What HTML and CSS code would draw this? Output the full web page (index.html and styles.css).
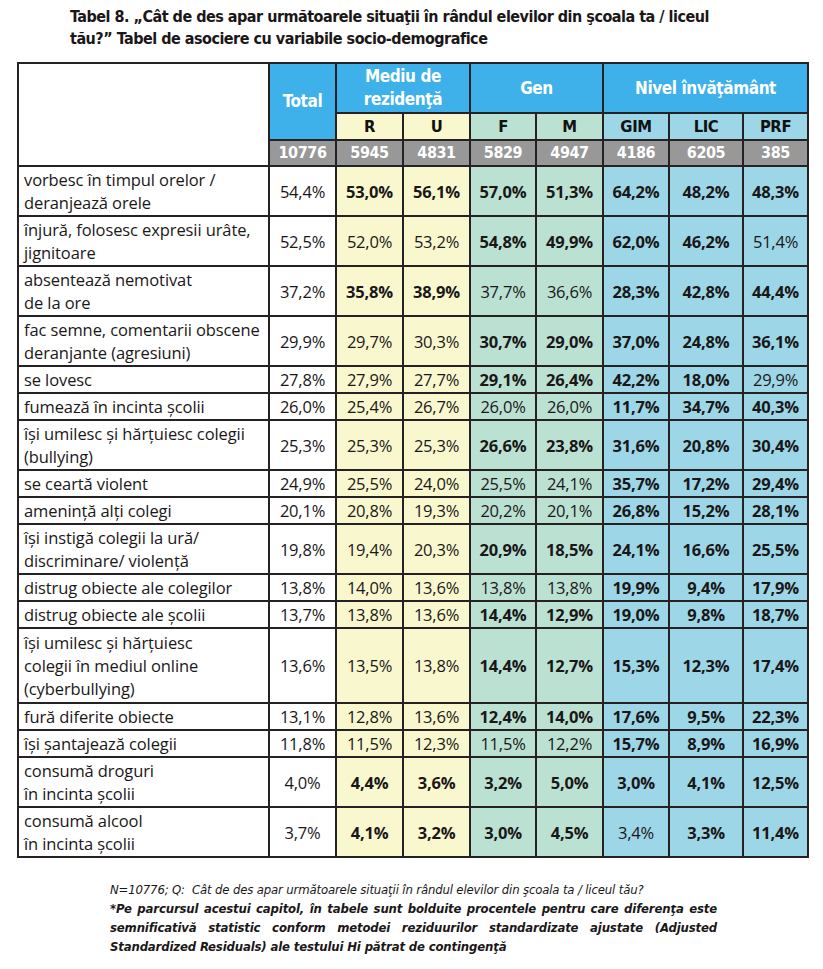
FILE: index.html
```html
<!DOCTYPE html>
<html lang="ro">
<head>
<meta charset="utf-8">
<link rel="stylesheet" href="styles.css">
</head>
<body>
<div class="page">
  <h1 class="title">Tabel 8. „Cât de des apar următoarele situaţii în rândul elevilor din şcoala ta / liceul<br>tău?” Tabel de asociere cu variabile socio-demografice</h1>
  <table class="data">
    <colgroup>
      <col class="c-label"><col class="c-total"><col class="c-r"><col class="c-u"><col class="c-f"><col class="c-m"><col class="c-gim"><col class="c-lic"><col class="c-prf">
    </colgroup>
    <thead>
      <tr class="h1">
        <th class="blank" rowspan="3"></th>
        <th class="hb" rowspan="2">Total</th>
        <th class="hb" colspan="2">Mediu de<br>rezidenţă</th>
        <th class="hb" colspan="2">Gen</th>
        <th class="hb" colspan="3">Nivel învăţământ</th>
      </tr>
      <tr class="h2">
        <th class="y">R</th><th class="y">U</th>
        <th class="g">F</th><th class="g">M</th>
        <th class="b">GIM</th><th class="b">LIC</th><th class="b">PRF</th>
      </tr>
      <tr class="h3">
        <th>10776</th><th>5945</th><th>4831</th><th>5829</th><th>4947</th><th>4186</th><th>6205</th><th>385</th>
      </tr>
    </thead>
    <tbody>
      <tr><td class="lbl">vorbesc în timpul orelor /<br>deranjează orele</td><td>54,4%</td><td class="y s">53,0%</td><td class="y s">56,1%</td><td class="g s">57,0%</td><td class="g s">51,3%</td><td class="b s">64,2%</td><td class="b s">48,2%</td><td class="b s">48,3%</td></tr>
      <tr><td class="lbl">înjură, folosesc expresii urâte,<br>jignitoare</td><td>52,5%</td><td class="y">52,0%</td><td class="y">53,2%</td><td class="g s">54,8%</td><td class="g s">49,9%</td><td class="b s">62,0%</td><td class="b s">46,2%</td><td class="b">51,4%</td></tr>
      <tr><td class="lbl">absentează nemotivat<br>de la ore</td><td>37,2%</td><td class="y s">35,8%</td><td class="y s">38,9%</td><td class="g">37,7%</td><td class="g">36,6%</td><td class="b s">28,3%</td><td class="b s">42,8%</td><td class="b s">44,4%</td></tr>
      <tr><td class="lbl">fac semne, comentarii obscene<br>deranjante (agresiuni)</td><td>29,9%</td><td class="y">29,7%</td><td class="y">30,3%</td><td class="g s">30,7%</td><td class="g s">29,0%</td><td class="b s">37,0%</td><td class="b s">24,8%</td><td class="b s">36,1%</td></tr>
      <tr><td class="lbl">se lovesc</td><td>27,8%</td><td class="y">27,9%</td><td class="y">27,7%</td><td class="g s">29,1%</td><td class="g s">26,4%</td><td class="b s">42,2%</td><td class="b s">18,0%</td><td class="b">29,9%</td></tr>
      <tr><td class="lbl">fumează în incinta şcolii</td><td>26,0%</td><td class="y">25,4%</td><td class="y">26,7%</td><td class="g">26,0%</td><td class="g">26,0%</td><td class="b s">11,7%</td><td class="b s">34,7%</td><td class="b s">40,3%</td></tr>
      <tr><td class="lbl">îşi umilesc şi hărţuiesc colegii<br>(bullying)</td><td>25,3%</td><td class="y">25,3%</td><td class="y">25,3%</td><td class="g s">26,6%</td><td class="g s">23,8%</td><td class="b s">31,6%</td><td class="b s">20,8%</td><td class="b s">30,4%</td></tr>
      <tr><td class="lbl">se ceartă violent</td><td>24,9%</td><td class="y">25,5%</td><td class="y">24,0%</td><td class="g">25,5%</td><td class="g">24,1%</td><td class="b s">35,7%</td><td class="b s">17,2%</td><td class="b s">29,4%</td></tr>
      <tr><td class="lbl">ameninţă alţi colegi</td><td>20,1%</td><td class="y">20,8%</td><td class="y">19,3%</td><td class="g">20,2%</td><td class="g">20,1%</td><td class="b s">26,8%</td><td class="b s">15,2%</td><td class="b s">28,1%</td></tr>
      <tr><td class="lbl">îşi instigă colegii la ură/<br>discriminare/ violenţă</td><td>19,8%</td><td class="y">19,4%</td><td class="y">20,3%</td><td class="g s">20,9%</td><td class="g s">18,5%</td><td class="b s">24,1%</td><td class="b s">16,6%</td><td class="b s">25,5%</td></tr>
      <tr><td class="lbl">distrug obiecte ale colegilor</td><td>13,8%</td><td class="y">14,0%</td><td class="y">13,6%</td><td class="g">13,8%</td><td class="g">13,8%</td><td class="b s">19,9%</td><td class="b s">9,4%</td><td class="b s">17,9%</td></tr>
      <tr><td class="lbl">distrug obiecte ale şcolii</td><td>13,7%</td><td class="y">13,8%</td><td class="y">13,6%</td><td class="g s">14,4%</td><td class="g s">12,9%</td><td class="b s">19,0%</td><td class="b s">9,8%</td><td class="b s">18,7%</td></tr>
      <tr class="tall"><td class="lbl">îşi umilesc şi hărţuiesc<br>colegii în mediul online<br>(cyberbullying)</td><td>13,6%</td><td class="y">13,5%</td><td class="y">13,8%</td><td class="g s">14,4%</td><td class="g s">12,7%</td><td class="b s">15,3%</td><td class="b s">12,3%</td><td class="b s">17,4%</td></tr>
      <tr><td class="lbl">fură diferite obiecte</td><td>13,1%</td><td class="y">12,8%</td><td class="y">13,6%</td><td class="g s">12,4%</td><td class="g s">14,0%</td><td class="b s">17,6%</td><td class="b s">9,5%</td><td class="b s">22,3%</td></tr>
      <tr><td class="lbl">îşi şantajează colegii</td><td>11,8%</td><td class="y">11,5%</td><td class="y">12,3%</td><td class="g">11,5%</td><td class="g">12,2%</td><td class="b s">15,7%</td><td class="b s">8,9%</td><td class="b s">16,9%</td></tr>
      <tr><td class="lbl">consumă droguri<br>în incinta şcolii</td><td>4,0%</td><td class="y s">4,4%</td><td class="y s">3,6%</td><td class="g s">3,2%</td><td class="g s">5,0%</td><td class="b s">3,0%</td><td class="b s">4,1%</td><td class="b s">12,5%</td></tr>
      <tr><td class="lbl">consumă alcool<br>în incinta şcolii</td><td>3,7%</td><td class="y s">4,1%</td><td class="y s">3,2%</td><td class="g s">3,0%</td><td class="g s">4,5%</td><td class="b">3,4%</td><td class="b s">3,3%</td><td class="b s">11,4%</td></tr>
    </tbody>
  </table>
  <div class="notes">
    <p class="q">N=10776; Q:&nbsp; Cât de des apar următoarele situaţii în rândul elevilor din şcoala ta / liceul tău?</p>
    <p class="star">*Pe parcursul acestui capitol, în tabele sunt bolduite procentele pentru care diferenţa este semnificativă statistic conform metodei reziduurilor standardizate ajustate (Adjusted Standardized Residuals) ale testului Hi pătrat de contingenţă</p>
  </div>
</div>
</body>
</html>
```

FILE: styles.css
```css
html, body {
  margin: 0;
  padding: 0;
  background: #ffffff;
}

.page {
  width: 823px;
  color: #1a1718;
  font-family: "Open Sans", "Noto Sans", sans-serif;
}

.title {
  margin: 6px 0 0 70px;
  font-family: "DejaVu Sans Condensed", "Liberation Sans", sans-serif;
  font-weight: bold;
  font-size: 16px;
  letter-spacing: -0.5px;
  line-height: 22px;
  color: #1a1718;
}

.data {
  margin: 12px 0 0 17px;
  border-collapse: collapse;
  table-layout: fixed;
  width: 790px;
  font-size: 16.5px;
}

.c-label { width: 251px; }
.c-total { width: 67px; }
.c-r { width: 67px; }
.c-u { width: 67px; }
.c-f { width: 66px; }
.c-m { width: 67px; }
.c-gim { width: 66px; }
.c-lic { width: 74px; }
.c-prf { width: 65px; }

.data th,
.data td {
  border: 2px solid #262223;
  padding: 1px 0;
  line-height: 23px;
  text-align: center;
  vertical-align: middle;
}

.data td {
  letter-spacing: -0.2px;
}

.data .tall td {
  padding: 2px 0;
}

.data th {
  font-family: "DejaVu Sans Condensed", "Liberation Sans", sans-serif;
  font-weight: bold;
  letter-spacing: -0.4px;
}

.blank { background: #ffffff; }

.hb {
  background: #3eb0ea;
  color: #ffffff;
  font-size: 17px;
  line-height: 22px;
}

.h1 th { height: 46px; }

.h2 th {
  font-size: 16.5px;
  color: #111;
}

.h3 th {
  background: #989898;
  color: #ffffff;
  font-size: 16px;
  line-height: 22px;
}

.y { background: #f9f7ce; }
.g { background: #bbe1d3; }
.b { background: #9dd6e6; }

.data td.lbl {
  text-align: left;
  padding-left: 5px;
  letter-spacing: -0.1px;
}

.data td.s { font-weight: bold; }

.notes {
  margin: 22px 0 0 110px;
  width: 607px;
  font-family: "DejaVu Sans Condensed", "Liberation Sans", sans-serif;
  font-style: italic;
  font-size: 13px;
  letter-spacing: -0.15px;
  line-height: 19px;
}

.notes p { margin: 0; }

.star {
  font-weight: bold;
  text-align: justify;
}
```
